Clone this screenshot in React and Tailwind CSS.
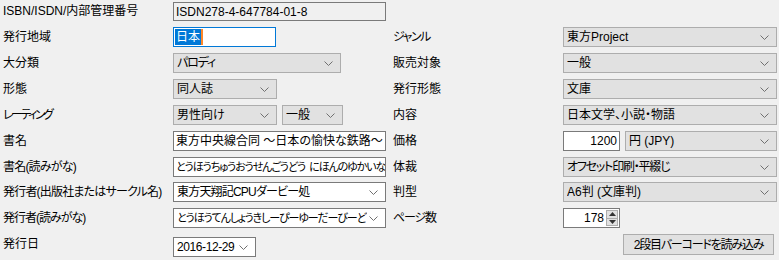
// ─── Controls ────────────────────────────────────────────────────────────────

function Chevron() {
  return (
    <svg width="9" height="5" viewBox="0 0 9 5" className="shrink-0 ml-[2px]">
      <path d="M0.5 0.5 L4.5 4.5 L8.5 0.5" fill="none" stroke="#707070" strokeWidth="1" />
    </svg>
  )
}

function Select({ w, children, white = false, className = '' }) {
  return (
    <div
      className={[
        'h-[20px] flex items-center pl-[3px] pr-[7px] border overflow-hidden whitespace-nowrap',
        white ? 'bg-white border-[#7a7a7a]' : 'bg-[#e1e1e1] border-[#adadad]',
        w,
        className,
      ].join(' ')}
    >
      <span className="flex-1 min-w-0 overflow-hidden">{children}</span>
      <Chevron />
    </div>
  )
}

function Input({ w, children, className = '' }) {
  return (
    <div className={`h-[20px] flex items-center px-[2px] bg-white border border-[#7a7a7a] overflow-hidden whitespace-nowrap ${w} ${className}`}>
      {children}
    </div>
  )
}

function Label({ children, w = 'w-[170px]' }) {
  return <div className={`${w} shrink-0 pl-[3px] h-[20px] leading-[20px] whitespace-nowrap`}>{children}</div>
}

function RLabel({ children }) {
  return <Label w="w-[173px]">{children}</Label>
}

function Row({ left, right, h = 'h-[26px]' }) {
  return (
    <div className={`flex ${h}`}>
      <div className="w-[390px] shrink-0 flex items-start">{left}</div>
      <div className="flex-1 flex items-start">{right}</div>
    </div>
  )
}

// ─── Page ────────────────────────────────────────────────────────────────────

export default function App() {
  return (
    <div
      className="w-[779px] h-[260px] bg-[#f0f0f0] text-[12px] text-black overflow-hidden [font-feature-settings:'palt']"
      style={{ fontFamily: '"Liberation Sans", "Noto Sans CJK JP", sans-serif' }}
    >
      {/* ISBN */}
      <div className="flex h-[27px] items-start pt-[2px]">
        <div className="w-[170px] pl-[3px] h-[19px] leading-[19px]">ISBN/ISDN/内部管理番号</div>
        <div className="ml-[3px] w-[213px] h-[19px] flex items-center px-[2px] bg-[#f0f0f0] border border-[#7a7a7a]">
          ISDN278-4-647784-01-8
        </div>
      </div>

      <Row
        left={<>
          <Label>発行地域</Label>
          <div className="ml-[3px] w-[103px] h-[20px] flex items-center pl-[1px] bg-white border border-[#0078d7]">
            <span className="bg-[#0078d7] text-white leading-[16px] px-px">日本</span>
            <span className="w-[2px] h-[16px] bg-[#ff8728]" />
          </div>
        </>}
        right={<>
          <RLabel><span className="tracking-[-1.5px]">ジャンル</span></RLabel>
          <Select w="w-[214px]">東方Project</Select>
        </>}
      />

      <Row
        left={<>
          <Label>大分類</Label>
          <Select w="w-[168px]" className="ml-[3px]"><span className="tracking-[-1.2px]">パロディ</span></Select>
        </>}
        right={<>
          <RLabel>販売対象</RLabel>
          <Select w="w-[214px]">一般</Select>
        </>}
      />

      <Row
        left={<>
          <Label>形態</Label>
          <Select w="w-[104px]" className="ml-[3px]">同人誌</Select>
        </>}
        right={<>
          <RLabel>発行形態</RLabel>
          <Select w="w-[214px]">文庫</Select>
        </>}
      />

      <Row
        left={<>
          <Label><span className="tracking-[-2.5px]">レーティング</span></Label>
          <Select w="w-[104px]" className="ml-[3px]">男性向け</Select>
          <Select w="w-[61px]" className="ml-[5px]">一般</Select>
        </>}
        right={<>
          <RLabel>内容</RLabel>
          <Select w="w-[214px]">日本文学、小説・物語</Select>
        </>}
      />

      <Row
        left={<>
          <Label>書名</Label>
          <Input w="w-[213px]" className="ml-[3px]">東方中央線合同 ～日本の愉快な鉄路～</Input>
        </>}
        right={<>
          <RLabel>価格</RLabel>
          <Input w="w-[57px]" className="justify-end">1200</Input>
          <Select w="w-[152px]" className="ml-[5px]">円 (JPY)</Select>
        </>}
      />

      <Row
        h="h-[25px]"
        left={<>
          <Label><span className="tracking-[-0.8px]">書名(読みがな)</span></Label>
          <Input w="w-[213px]" className="ml-[3px]">
            <span className="text-[11px] tracking-[-1.1px]">とうほうちゅうおうせんごうどう</span>
            <span className="ml-[4px] text-[11px] tracking-[-1.1px]">にほんのゆかいな</span>
          </Input>
        </>}
        right={<>
          <RLabel>体裁</RLabel>
          <Select w="w-[214px]"><span className="tracking-[-1.2px]">オフセット印刷・平綴じ</span></Select>
        </>}
      />

      <Row
        left={<>
          <Label><span className="tracking-[-0.8px]">発行者(出版社またはサークル名)</span></Label>
          <Select w="w-[213px]" white className="ml-[3px]"><span className="tracking-[-0.8px]">東方天翔記CPUダービー処</span></Select>
        </>}
        right={<>
          <RLabel>判型</RLabel>
          <Select w="w-[214px]">A6判 (文庫判)</Select>
        </>}
      />

      <Row
        left={<>
          <Label><span className="tracking-[-1px]">発行者(読みがな)</span></Label>
          <Select w="w-[213px]" white className="ml-[3px]">
            <span className="text-[11px] tracking-[-1.1px]">とうほうてんしょうきしーぴーゆーだーびーど</span>
          </Select>
        </>}
        right={<>
          <RLabel><span className="tracking-[-1.2px]">ページ数</span></RLabel>
          <div className="w-[57px] h-[20px] flex items-center justify-end bg-white border border-[#7a7a7a] pr-px">
            <span className="mr-[2px]">178</span>
            <div className="w-[12px] h-[16px] flex flex-col border border-[#adadad] bg-[#e1e1e1]">
              <div className="flex-1 flex items-center justify-center border-b border-[#adadad]">
                <svg width="7" height="4" viewBox="0 0 7 4"><path d="M3.5 0 L7 4 L0 4 Z" fill="#333" /></svg>
              </div>
              <div className="flex-1 flex items-center justify-center">
                <svg width="7" height="4" viewBox="0 0 7 4"><path d="M0 0 L7 0 L3.5 4 Z" fill="#333" /></svg>
              </div>
            </div>
          </div>
        </>}
      />

      <Row
        left={<>
          <Label>発行日</Label>
          <Select w="w-[83px]" white className="ml-[3px] mt-[3px]"><span className="tracking-[-0.4px]">2016-12-29</span></Select>
        </>}
        right={<>
          <div className="w-[233px] shrink-0" />
          <button className="w-[151px] h-[21px] bg-[#e1e1e1] border border-[#adadad] text-[12px] whitespace-nowrap">
            <span className="tracking-[-1.2px]">2段目バーコードを読み込み</span>
          </button>
        </>}
      />
    </div>
  )
}
